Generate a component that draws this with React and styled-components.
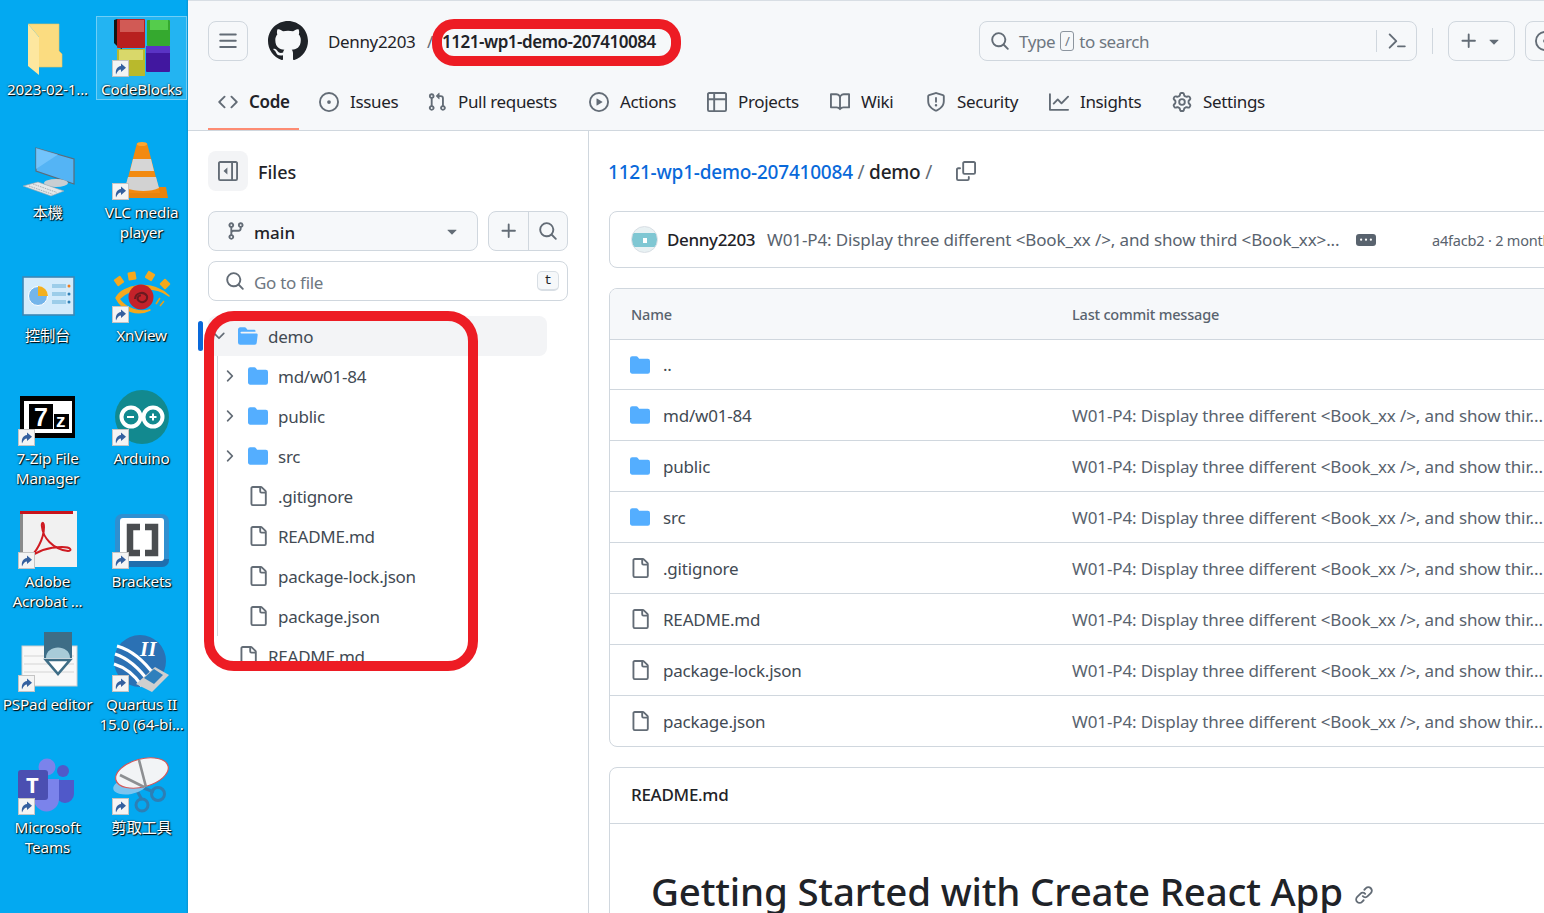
import React from "react";
import styled, { createGlobalStyle } from "styled-components";

const UI = `"Noto Sans", "Open Sans", "Liberation Sans", sans-serif`;

const Global = createGlobalStyle`
  html, body { margin: 0; padding: 0; height: 913px; overflow: hidden; background: #fff; }
  body { font-family: ${UI}; color: #1f2328; }
  * { box-sizing: border-box; }
`;

const Page = styled.div`
  display: flex;
  width: 1544px;
  height: 913px;
  overflow: hidden;
  position: relative;
`;

/* ---------- octicons ---------- */
const OCT = {
  bars: "M1 2.75A.75.75 0 0 1 1.75 2h12.5a.75.75 0 0 1 0 1.5H1.75A.75.75 0 0 1 1 2.75Zm0 5A.75.75 0 0 1 1.75 7h12.5a.75.75 0 0 1 0 1.5H1.75A.75.75 0 0 1 1 7.75ZM1.75 12h12.5a.75.75 0 0 1 0 1.5H1.75a.75.75 0 0 1 0-1.5Z",
  github: "M8 0c4.42 0 8 3.58 8 8a8.013 8.013 0 0 1-5.45 7.59c-.4.08-.55-.17-.55-.38 0-.27.01-1.13.01-2.2 0-.75-.25-1.23-.54-1.48 1.78-.2 3.65-.88 3.65-3.95 0-.88-.31-1.59-.82-2.15.08-.2.36-1.02-.08-2.12 0 0-.67-.22-2.2.82-.64-.18-1.32-.27-2-.27-.68 0-1.36.09-2 .27-1.53-1.03-2.2-.82-2.2-.82-.44 1.1-.16 1.92-.08 2.12-.51.56-.82 1.28-.82 2.15 0 3.06 1.86 3.75 3.64 3.95-.23.2-.44.55-.51 1.07-.46.21-1.61.55-2.33-.66-.15-.24-.6-.83-1.23-.82-.67.01-.27.38.01.53.34.19.73.9.82 1.13.16.45.68 1.31 2.69.94 0 .67.01 1.3.01 1.49 0 .21-.15.45-.55.38A7.995 7.995 0 0 1 0 8c0-4.42 3.58-8 8-8Z",
  code: "m11.28 3.22 4.25 4.25a.75.75 0 0 1 0 1.06l-4.25 4.25a.749.749 0 0 1-1.275-.326.749.749 0 0 1 .215-.734L13.94 8l-3.72-3.72a.749.749 0 0 1 .326-1.275.749.749 0 0 1 .734.215Zm-6.56 0a.751.751 0 0 1 1.042.018.751.751 0 0 1 .018 1.042L2.06 8l3.72 3.72a.749.749 0 0 1-.326 1.275.749.749 0 0 1-.734-.215L.47 8.53a.75.75 0 0 1 0-1.06Z",
  issue: "M8 9.5a1.5 1.5 0 1 0 0-3 1.5 1.5 0 0 0 0 3ZM8 0a8 8 0 1 1 0 16A8 8 0 0 1 8 0ZM1.5 8a6.5 6.5 0 1 0 13 0 6.5 6.5 0 0 0-13 0Z",
  pull: "M1.5 3.25a2.25 2.25 0 1 1 3 2.122v5.256a2.251 2.251 0 1 1-1.5 0V5.372A2.25 2.25 0 0 1 1.5 3.25Zm5.677-.177L9.573.677A.25.25 0 0 1 10 .854V2.5h1A2.5 2.5 0 0 1 13.5 5v5.628a2.251 2.251 0 1 1-1.5 0V5a1 1 0 0 0-1-1h-1v1.646a.25.25 0 0 1-.427.177L7.177 3.427a.25.25 0 0 1 0-.354ZM3.75 2.5a.75.75 0 1 0 0 1.5.75.75 0 0 0 0-1.5Zm0 9.5a.75.75 0 1 0 0 1.5.75.75 0 0 0 0-1.5Zm8.25.75a.75.75 0 1 0 1.5 0 .75.75 0 0 0-1.5 0Z",
  play: "M8 0a8 8 0 1 1 0 16A8 8 0 0 1 8 0ZM1.5 8a6.5 6.5 0 1 0 13 0 6.5 6.5 0 0 0-13 0Zm4.879-2.773 4.264 2.559a.25.25 0 0 1 0 .428l-4.264 2.559A.25.25 0 0 1 6 10.559V5.442a.25.25 0 0 1 .379-.215Z",
  table: "M0 1.75C0 .784.784 0 1.75 0h12.5C15.216 0 16 .784 16 1.75v12.5A1.75 1.75 0 0 1 14.25 16H1.75A1.75 1.75 0 0 1 0 14.25ZM6.5 6.5v8h7.75a.25.25 0 0 0 .25-.25V6.5Zm8-1.5V1.75a.25.25 0 0 0-.25-.25H6.5V5Zm-13 1.5v7.75c0 .138.112.25.25.25H5v-8ZM5 5V1.5H1.75a.25.25 0 0 0-.25.25V5Z",
  book: "M0 1.75A.75.75 0 0 1 .75 1h4.253c1.227 0 2.317.59 3 1.501A3.743 3.743 0 0 1 11.006 1h4.245a.75.75 0 0 1 .75.75v10.5a.75.75 0 0 1-.75.75h-4.507a2.25 2.25 0 0 0-1.591.659l-.622.621a.75.75 0 0 1-1.06 0l-.622-.621A2.25 2.25 0 0 0 5.258 13H.75a.75.75 0 0 1-.75-.75Zm7.251 10.324.004-5.073-.002-2.253A2.25 2.25 0 0 0 5.003 2.5H1.5v9h3.757a3.75 3.75 0 0 1 1.994.574ZM8.755 4.75l-.004 7.322a3.752 3.752 0 0 1 1.992-.572H14.5v-9h-3.495a2.25 2.25 0 0 0-2.25 2.25Z",
  shield: "M7.467.133a1.748 1.748 0 0 1 1.066 0l5.25 1.68A1.75 1.75 0 0 1 15 3.48V7c0 1.566-.32 3.182-1.303 4.682-.983 1.498-2.585 2.813-5.032 3.855a1.697 1.697 0 0 1-1.33 0c-2.447-1.042-4.049-2.357-5.032-3.855C1.32 10.182 1 8.566 1 7V3.48a1.75 1.75 0 0 1 1.217-1.667Zm.61 1.429a.25.25 0 0 0-.153 0l-5.25 1.68a.25.25 0 0 0-.174.238V7c0 1.358.275 2.666 1.057 3.86.784 1.194 2.121 2.34 4.366 3.297a.196.196 0 0 0 .154 0c2.245-.956 3.582-2.104 4.366-3.298C13.225 9.666 13.5 8.36 13.5 7V3.48a.251.251 0 0 0-.174-.237l-5.25-1.68ZM8.75 4.75v3a.75.75 0 0 1-1.5 0v-3a.75.75 0 0 1 1.5 0ZM9 10.5a1 1 0 1 1-2 0 1 1 0 0 1 2 0Z",
  graph: "M1.5 1.75V13.5h13.75a.75.75 0 0 1 0 1.5H.75a.75.75 0 0 1-.75-.75V1.75a.75.75 0 0 1 1.5 0Zm14.28 2.53-5.25 5.25a.75.75 0 0 1-1.06 0L7 7.06 4.28 9.78a.751.751 0 0 1-1.042-.018.751.751 0 0 1-.018-1.042l3.25-3.25a.75.75 0 0 1 1.06 0L10 7.94l4.72-4.72a.751.751 0 0 1 1.042.018.751.751 0 0 1 .018 1.042Z",
  gear: "M8 0a8.2 8.2 0 0 1 .701.031C9.444.095 9.99.645 10.16 1.29l.288 1.107c.018.066.079.158.212.224.231.114.454.243.668.386.123.082.233.09.299.071l1.103-.303c.644-.176 1.392.021 1.82.63.27.385.506.792.704 1.218.315.675.111 1.422-.364 1.891l-.814.806c-.049.048-.098.147-.088.294.016.257.016.515 0 .772-.01.147.038.246.088.294l.814.806c.475.469.679 1.216.364 1.891a7.977 7.977 0 0 1-.704 1.217c-.428.61-1.176.807-1.82.63l-1.102-.302c-.067-.019-.177-.011-.3.071a5.909 5.909 0 0 1-.668.386c-.133.066-.194.158-.211.224l-.29 1.106c-.168.646-.715 1.196-1.458 1.26a8.006 8.006 0 0 1-1.402 0c-.743-.064-1.289-.614-1.458-1.26l-.289-1.106c-.018-.066-.079-.158-.212-.224a5.738 5.738 0 0 1-.668-.386c-.123-.082-.233-.09-.299-.071l-1.103.303c-.644.176-1.392-.021-1.82-.63a8.12 8.12 0 0 1-.704-1.218c-.315-.675-.111-1.422.363-1.891l.815-.806c.05-.048.098-.147.088-.294a6.214 6.214 0 0 1 0-.772c.01-.147-.038-.246-.088-.294l-.815-.806C.635 6.045.431 5.298.746 4.623a7.92 7.92 0 0 1 .704-1.217c.428-.61 1.176-.807 1.82-.63l1.102.302c.067.019.177.011.3-.071.214-.143.437-.272.668-.386.133-.066.194-.158.211-.224l.29-1.106C6.009.645 6.556.095 7.299.03 7.53.01 7.764 0 8 0Zm-.571 1.525c-.036.003-.108.036-.137.146l-.289 1.105c-.147.561-.549.967-.998 1.189-.173.086-.34.183-.5.29-.417.278-.97.423-1.529.27l-1.103-.303c-.109-.03-.175.016-.195.045-.22.312-.412.644-.573.99-.014.031-.021.11.059.19l.815.806c.411.406.562.957.53 1.456a4.709 4.709 0 0 0 0 .582c.032.499-.119 1.05-.53 1.456l-.815.806c-.081.08-.073.159-.059.19.162.346.353.677.573.989.02.03.085.076.195.046l1.102-.303c.56-.153 1.113-.008 1.53.27.161.107.328.204.501.29.447.222.85.629.997 1.189l.289 1.105c.029.109.101.143.137.146a6.6 6.6 0 0 0 1.142 0c.036-.003.108-.036.137-.146l.289-1.105c.147-.561.549-.967.998-1.189.173-.086.34-.183.5-.29.417-.278.97-.423 1.529-.27l1.103.303c.109.029.175-.016.195-.045.22-.313.411-.644.573-.99.014-.031.021-.11-.059-.19l-.815-.806c-.411-.406-.562-.957-.53-1.456a4.709 4.709 0 0 0 0-.582c-.032-.499.119-1.05.53-1.456l.815-.806c.081-.08.073-.159.059-.19a6.464 6.464 0 0 0-.573-.989c-.02-.03-.085-.076-.195-.046l-1.102.303c-.56.153-1.113.008-1.53-.27a4.44 4.44 0 0 0-.501-.29c-.447-.222-.85-.629-.997-1.189l-.289-1.105c-.029-.11-.101-.143-.137-.146a6.6 6.6 0 0 0-1.142 0ZM11 8a3 3 0 1 1-6 0 3 3 0 0 1 6 0ZM9.5 8a1.5 1.5 0 1 0-3.001.001A1.5 1.5 0 0 0 9.5 8Z",
  search: "M10.68 11.74a6 6 0 0 1-7.922-8.982 6 6 0 0 1 8.982 7.922l3.04 3.04a.749.749 0 0 1-.326 1.275.749.749 0 0 1-.734-.215ZM11.5 7a4.499 4.499 0 1 0-8.997 0A4.499 4.499 0 0 0 11.5 7Z",
  plus: "M7.75 2a.75.75 0 0 1 .75.75V7h4.25a.75.75 0 0 1 0 1.5H8.5v4.25a.75.75 0 0 1-1.5 0V8.5H2.75a.75.75 0 0 1 0-1.5H7V2.75A.75.75 0 0 1 7.75 2Z",
  tri: "m4.427 7.427 3.396 3.396a.25.25 0 0 0 .354 0l3.396-3.396A.25.25 0 0 0 11.396 7H4.604a.25.25 0 0 0-.177.427Z",
  branch: "M9.5 3.25a2.25 2.25 0 1 1 3 2.122V6A2.5 2.5 0 0 1 10 8.5H6a1 1 0 0 0-1 1v1.128a2.251 2.251 0 1 1-1.5 0V5.372a2.25 2.25 0 1 1 1.5 0v1.836A2.493 2.493 0 0 1 6 7h4a1 1 0 0 0 1-1v-.628A2.25 2.25 0 0 1 9.5 3.25Zm-6 0a.75.75 0 1 0 1.5 0 .75.75 0 0 0-1.5 0Zm8.25-.75a.75.75 0 1 0 0 1.5.75.75 0 0 0 0-1.5ZM4.25 12a.75.75 0 1 0 0 1.5.75.75 0 0 0 0-1.5Z",
  file: "M2 1.75C2 .784 2.784 0 3.75 0h6.586c.464 0 .909.184 1.237.513l2.914 2.914c.329.328.513.773.513 1.237v9.586A1.75 1.75 0 0 1 13.25 16h-9.5A1.75 1.75 0 0 1 2 14.25Zm1.75-.25a.25.25 0 0 0-.25.25v12.5c0 .138.112.25.25.25h9.5a.25.25 0 0 0 .25-.25V6h-2.75A1.75 1.75 0 0 1 9 4.25V1.5Zm6.75.062V4.25c0 .138.112.25.25.25h2.688l-.011-.013-2.914-2.914-.013-.011Z",
  folder: "M1.75 1A1.75 1.75 0 0 0 0 2.75v10.5C0 14.216.784 15 1.75 15h12.5A1.75 1.75 0 0 0 16 13.25v-8.5A1.75 1.75 0 0 0 14.25 3H7.5a.25.25 0 0 1-.2-.1l-.9-1.2C6.07 1.26 5.55 1 5 1H1.75Z",
  folderOpen: "M.513 1.513A1.75 1.75 0 0 1 1.75 1h3.5c.55 0 1.07.26 1.4.7l.9 1.2a.25.25 0 0 0 .2.1H13a1 1 0 0 1 1 1v.5H2.75a.75.75 0 0 0 0 1.5h11.978a1 1 0 0 1 .994 1.117L15 13.25A1.75 1.75 0 0 1 13.25 15H1.75A1.75 1.75 0 0 1 0 13.25V2.75c0-.464.184-.91.513-1.237Z",
  right: "M6.22 3.22a.75.75 0 0 1 1.06 0l4.25 4.25a.75.75 0 0 1 0 1.06l-4.25 4.25a.751.751 0 0 1-1.042-.018.751.751 0 0 1-.018-1.042L9.94 8 6.22 4.28a.75.75 0 0 1 0-1.06Z",
  down: "M12.78 5.22a.749.749 0 0 1 0 1.06l-4.25 4.25a.749.749 0 0 1-1.06 0L3.22 6.28a.749.749 0 1 1 1.06-1.06L8 8.939l3.72-3.719a.749.749 0 0 1 1.06 0Z",
  copy: "M0 6.75C0 5.784.784 5 1.75 5h1.5a.75.75 0 0 1 0 1.5h-1.5a.25.25 0 0 0-.25.25v7.5c0 .138.112.25.25.25h7.5a.25.25 0 0 0 .25-.25v-1.5a.75.75 0 0 1 1.5 0v1.5A1.75 1.75 0 0 1 9.25 16h-7.5A1.75 1.75 0 0 1 0 14.25ZM5 1.75C5 .784 5.784 0 6.75 0h7.5C15.216 0 16 .784 16 1.75v7.5A1.75 1.75 0 0 1 14.25 11h-7.5A1.75 1.75 0 0 1 5 9.25Zm1.75-.25a.25.25 0 0 0-.25.25v7.5c0 .138.112.25.25.25h7.5a.25.25 0 0 0 .25-.25v-7.5a.25.25 0 0 0-.25-.25Z",
  kebab: "M8 9a1.5 1.5 0 1 0 0-3 1.5 1.5 0 0 0 0 3ZM1.5 9a1.5 1.5 0 1 0 0-3 1.5 1.5 0 0 0 0 3Zm13 0a1.5 1.5 0 1 0 0-3 1.5 1.5 0 0 0 0 3Z",
  link: "m7.775 3.275 1.25-1.25a3.5 3.5 0 1 1 4.95 4.95l-2.5 2.5a3.5 3.5 0 0 1-4.95 0 .751.751 0 0 1 .018-1.042.751.751 0 0 1 1.042-.018 1.998 1.998 0 0 0 2.83 0l2.5-2.5a2.002 2.002 0 0 0-2.83-2.83l-1.25 1.25a.751.751 0 0 1-1.042-.018.751.751 0 0 1-.018-1.042Zm-4.69 9.64a1.998 1.998 0 0 0 2.83 0l1.25-1.25a.751.751 0 0 1 1.042.018.751.751 0 0 1 .018 1.042l-1.25 1.25a3.5 3.5 0 1 1-4.95-4.95l2.5-2.5a3.5 3.5 0 0 1 4.95 0 .751.751 0 0 1-.018 1.042.751.751 0 0 1-1.042.018 1.998 1.998 0 0 0-2.83 0l-2.5 2.5a1.998 1.998 0 0 0 0 2.83Z",
  palette: "m6.354 8.04-4.773 4.773a.75.75 0 1 0 1.061 1.06L7.945 8.57a.75.75 0 0 0 0-1.06L2.642 2.206a.75.75 0 0 0-1.06 1.061L6.353 8.04ZM8.75 11.5a.75.75 0 0 0 0 1.5h5.5a.75.75 0 0 0 0-1.5h-5.5Z",
  sidebar: "M1.75 0h12.5C15.216 0 16 .784 16 1.75v12.5A1.75 1.75 0 0 1 14.25 16H1.75A1.75 1.75 0 0 1 0 14.25V1.75C0 .784.784 0 1.75 0ZM1.5 1.75v12.5c0 .138.112.25.25.25H10.5v-13H1.75a.25.25 0 0 0-.25.25ZM12 14.5h2.25a.25.25 0 0 0 .25-.25V1.75a.25.25 0 0 0-.25-.25H12ZM7.5 5.2v5.6L4.4 8z",
};
const Oct = ({ n, size = 20 }) => (
  <svg width={size} height={size} viewBox="0 0 16 16" fill="currentColor"><path d={OCT[n]} /></svg>
);

/* ---------- desktop ---------- */
const Desktop = styled.div`
  width: 188px;
  flex: none;
  height: 913px;
  background: linear-gradient(90deg, #03a9f1 0, #03a9f1 186px, #0a93cf 188px);
  display: grid;
  grid-template-columns: 95px 91px;
  grid-auto-rows: 123px;
  padding-top: 16px;
  column-gap: 1px;
`;
const DeskItem = styled.div`
  height: 84px;
  display: flex;
  flex-direction: column;
  align-items: center;
  border: 1px solid ${p => (p.$active ? "rgba(255,255,255,.35)" : "transparent")};
  background: ${p => (p.$active ? "rgba(255,255,255,.13)" : "transparent")};
`;
const IconBox = styled.div`
  width: 64px;
  height: 63px;
  flex: none;
  position: relative;
  svg { display: block; overflow: visible; }
`;
const ShortcutBadge = styled.svg`
  position: absolute;
  left: 2px;
  top: 43px;
`;
const DeskLabel = styled.div`
  width: calc(100% + 6px);
  flex: none;
  font: 15.3px/19.5px ${UI}, "Noto Sans CJK TC", sans-serif;
  color: #fff;
  text-align: center;
  white-space: pre-line;
  text-shadow: 1px 1px 1px #000, 0 0 2px rgba(0,0,0,.85);
  letter-spacing: -0.2px;
`;

const Shortcut = () => (
  <ShortcutBadge width="17" height="17" viewBox="0 0 17 17">
    <rect x=".5" y=".5" width="16" height="16" fill="#f4f4f4" stroke="#c4c4c4" />
    <path d="M4 14.500c-.8-4.500 1-8 5-8.500V3.500l5 4.300-5 4.300V9.500c-2.200 0-3.500 1.500-5 5z" fill="#34609f" />
  </ShortcutBadge>
);

const S = ({ children }) => <svg width="64" height="64" viewBox="0 0 64 64">{children}</svg>;

const FolderIco = () => (
  <S>
    <path d="M12 7h31v27l3 3v13H23V20z" fill="#fbdc80" />
    <path d="M12 7l11 13v38l-11-9z" fill="#fde79f" />
    <path d="M12 7h31v27l3 3v13H23" fill="none" stroke="#ecc65f" strokeWidth=".6" />
  </S>
);
const CodeBlocksIco = () => (
  <S>
    <path d="M4 3l3-1h5v30l-4-2-4-4z" fill="#151515" />
    <rect x="7" y="2" width="28" height="29" rx="1" fill="#b8201f" />
    <rect x="10" y="3" width="24" height="12" fill="#d15a55" />
    <rect x="37" y="3" width="23" height="26" rx="1" fill="#35a92f" />
    <rect x="40" y="3" width="18" height="10" fill="#55cc4c" />
    <rect x="7" y="32" width="28" height="27" fill="#b9b92c" />
    <rect x="9" y="33" width="24" height="10" fill="#d9d86a" />
    <rect x="36" y="29" width="24" height="26" rx="1" fill="#41179f" />
    <rect x="36" y="29" width="24" height="7" fill="#5a33c4" />
  </S>
);
const MonitorIco = () => (
  <S>
    <path d="M20 8l38 11v25L20 31z" fill="#54b4f5" stroke="#5d6b78" strokeWidth="1.2" />
    <path d="M20 8l22 6.5L20 29z" fill="#7fcbff" opacity=".7" />
    <ellipse cx="40" cy="43" rx="12" ry="4" fill="#c9ced2" />
    <path d="M22 42l26 9-13 5-28-10z" fill="#e4e7e9" stroke="#9aa3aa" strokeWidth=".6" />
    <path d="M17 44l24 8.5M13 46l24 8.500" stroke="#a5adb3" strokeWidth="1" strokeDasharray="1.5 1" />
  </S>
);
const VlcIco = () => (
  <S>
    <path d="M12 47h44l2 11H10z" fill="#e8830c" />
    <path d="M27 3h10l13 50H14z" fill="#f28a10" />
    <path d="M23 19h18l3 12H20z" fill="#d6d6d6" />
    <path d="M18 37h28l3 11c-8 4-22 4-34 0z" fill="#d2d2d2" />
    <ellipse cx="32" cy="4" rx="5" ry="2" fill="#ffa62e" />
  </S>
);
const ControlIco = () => (
  <S>
    <rect x="7" y="14" width="51" height="38" fill="#d3ebfb" stroke="#3e87b5" strokeWidth="1.6" />
    <circle cx="22" cy="33" r="9.5" fill="#74b5ea" stroke="#fff" strokeWidth="1" />
    <path d="M22 33v-10a10 10 0 0 1 10 10z" fill="#f2b01f" />
    <rect x="36" y="21" width="14" height="4" fill="#9ccde9" />
    <rect x="36" y="29" width="14" height="4" fill="#9ccde9" />
    <rect x="36" y="37" width="14" height="4" fill="#9ccde9" />
    <circle cx="53" cy="23" r="1.5" fill="#ef7d1d" />
    <circle cx="53" cy="31" r="1.5" fill="#2f7fb5" />
    <circle cx="53" cy="39" r="1.5" fill="#2f7fb5" />
  </S>
);
const XnViewIco = () => (
  <S>
    <g fill="#f5a81c">
      <rect x="5" y="14" width="8" height="8" rx="1" transform="rotate(-35 9 18)" />
      <rect x="18" y="9" width="8" height="8" rx="1" transform="rotate(-10 22 13)" />
      <rect x="36" y="9" width="8" height="8" rx="1" transform="rotate(30 40 13)" />
      <rect x="51" y="17" width="8" height="8" rx="1" transform="rotate(45 55 21)" />
    </g>
    <path d="M6 35C12 22 42 16 59 33C46 23 22 23 9 36C16 46 30 50 40 47C28 53 13 49 6 35Z" fill="#f5a81c" stroke="#f5a81c" strokeWidth="1.5" strokeLinejoin="round" />
    <circle cx="31" cy="34" r="12.500" fill="#c4222a" />
    <path d="M25 36a6.500 6.500 0 0 1 12-3 5 5 0 0 1-8 5 3 3 0 0 1 2-5.500" fill="none" stroke="#6b1a20" strokeWidth="2" />
    <path d="M46 41l4-6M50 43l4-5" stroke="#e0a01e" strokeWidth="1.6" />
  </S>
);
const ZipText = styled.text`
  font: 700 ${p => p.$s}px "Liberation Sans", sans-serif;
  fill: #fff;
`;
const ZipIco = () => (
  <S>
    <rect x="4" y="10" width="55" height="42" fill="#000" />
    <rect x="8" y="15" width="48" height="32" fill="#fff" />
    <rect x="13" y="18" width="24" height="25" fill="#000" />
    <rect x="38" y="28" width="15" height="15" fill="#000" />
    <ZipText x="18" y="40" $s={25}>7</ZipText>
    <ZipText x="40" y="41" $s={19}>z</ZipText>
  </S>
);
const ArduinoIco = () => (
  <S>
    <circle cx="32" cy="31" r="27" fill="#12898f" />
    <circle cx="21" cy="31" r="9.500" fill="none" stroke="#fff" strokeWidth="4" />
    <circle cx="43" cy="31" r="9.500" fill="none" stroke="#fff" strokeWidth="4" />
    <path d="M17 31h7M39.500 31h7M43 27.500v7" stroke="#fff" strokeWidth="2" />
  </S>
);
const AcrobatIco = () => (
  <S>
    <rect x="4" y="2" width="57" height="56" fill="#f1f1f1" />
    <rect x="4" y="2" width="3" height="56" fill="#8a8a8a" />
    <rect x="4" y="2" width="53" height="3" fill="#c8141c" />
    <path d="M12 50c8-6 16-20 16-32 0-6-3-5-2 0 1 10 10 22 26 24 4 0 4-4-6-4-10 0-24 3-34 12z" fill="none" stroke="#cf1b22" strokeWidth="2" />
  </S>
);
const BracketsIco = () => (
  <S>
    <rect x="5" y="5" width="54" height="53" rx="7" fill="#2f8fd0" />
    <path d="M5 50h54v1a7 7 0 0 1-7 7H12a7 7 0 0 1-7-7z" fill="#1f6fae" />
    <rect x="10" y="9" width="44" height="43" rx="3" fill="#fff" />
    <path d="M30 18H20v26h10M35 18h10v26H35" fill="none" stroke="#4a4d50" strokeWidth="6.500" />
  </S>
);
const PspadIco = () => (
  <S>
    <rect x="6" y="14" width="55" height="40" fill="#f8f8f8" stroke="#cfcfcf" />
    <path d="M8 24h50M8 32h50M8 40h50" stroke="#d4d4d4" />
    <rect x="28" y="0" width="28" height="26" fill="#3e6d86" />
    <path d="M30 26c0-14 24-14 24 0z" fill="#a8cbd8" />
    <path d="M30 28h24L42 42z" fill="#fff" stroke="#3e6d86" strokeWidth="2.600" />
    <path d="M36 30h12l-6 7z" fill="#fff" />
  </S>
);
const QuartusNum = styled.text`
  font: italic 700 21px "Liberation Serif", serif;
  fill: #fff;
`;
const QuartusIco = () => (
  <S>
    <circle cx="30" cy="29" r="26" fill="#2b71b4" />
    <path d="M5 22c12 4 24 14 34 28M7 14c14 4 28 16 38 30M4 32c10 3 20 10 28 22" fill="none" stroke="#fff" strokeWidth="3.200" />
    <path d="M26 52l19-17 14 8-17 17z" fill="#cfcfcf" />
    <path d="M34 46l10-9 9 6-9 9z" fill="#2f80bd" />
    <QuartusNum x="30" y="24">II</QuartusNum>
  </S>
);
const TeamsT = styled.text`
  font: 700 22px ${UI}, sans-serif;
  fill: #fff;
`;
const TeamsIco = () => (
  <S>
    <circle cx="47" cy="16" r="6" fill="#5059c9" />
    <path d="M38 25h20v14a9 9 0 0 1-18 0z" fill="#5059c9" />
    <circle cx="31" cy="12" r="8.500" fill="#7b83eb" />
    <path d="M18 24h25v20a12.500 12.500 0 0 1-25 0z" fill="#7b83eb" />
    <rect x="2" y="15" width="30" height="30" rx="3" fill="#4b4fb1" />
    <TeamsT x="10" y="38">T</TeamsT>
  </S>
);
const SnipIco = () => (
  <S>
    <circle cx="32" cy="50" r="6" fill="none" stroke="#2d7fb5" strokeWidth="3" />
    <circle cx="48" cy="39" r="6.500" fill="none" stroke="#2d7fb5" strokeWidth="3" />
    <path d="M24 30l8 15M26 30l18 7" stroke="#2d7fb5" strokeWidth="3" />
    <ellipse cx="20" cy="31" rx="17" ry="8" fill="#7cc4ef" transform="rotate(-10 20 31)" />
    <ellipse cx="32" cy="18" rx="27" ry="14" fill="#f2f4f6" stroke="#d4585a" strokeWidth="1.200" transform="rotate(-15 32 18)" />
    <path d="M29 5l7 27M10 20l24 12" stroke="#8d8f92" strokeWidth="2.600" />
  </S>
);

const deskItems = [
  { label: "2023-02-1...", Icon: FolderIco },
  { label: "CodeBlocks", Icon: CodeBlocksIco, link: true, active: true },
  { label: "本機", Icon: MonitorIco },
  { label: "VLC media\nplayer", Icon: VlcIco, link: true },
  { label: "控制台", Icon: ControlIco },
  { label: "XnView", Icon: XnViewIco, link: true },
  { label: "7-Zip File\nManager", Icon: ZipIco, link: true },
  { label: "Arduino", Icon: ArduinoIco, link: true },
  { label: "Adobe\nAcrobat ...", Icon: AcrobatIco, link: true },
  { label: "Brackets", Icon: BracketsIco, link: true },
  { label: "PSPad editor", Icon: PspadIco, link: true },
  { label: "Quartus II\n15.0 (64-bi...", Icon: QuartusIco, link: true },
  { label: "Microsoft\nTeams", Icon: TeamsIco, link: true },
  { label: "剪取工具", Icon: SnipIco, link: true },
];

/* ---------- github header ---------- */
const Main = styled.div`
  flex: 1;
  min-width: 0;
  overflow: hidden;
  display: flex;
  flex-direction: column;
`;
const Header = styled.header`
  height: 131px;
  flex: none;
  background: #f6f8fa;
  border-top: 1px solid #d8dee4;
  border-bottom: 1px solid #d0d7de;
  padding: 20px 0 0 20px;
  display: flex;
  flex-direction: column;
`;
const TopRow = styled.div`
  display: flex;
  align-items: center;
  height: 40px;
  width: 1400px;
`;
const IconButton = styled.div`
  width: ${p => p.$w || 40}px;
  height: 40px;
  flex: none;
  display: flex;
  align-items: center;
  justify-content: center;
  gap: 5px;
  border: 1px solid #d0d7de;
  border-radius: 8px;
  color: #636c76;
  background: #f6f8fa;
`;
const Logo = styled.div`
  margin: 0 20px;
  display: flex;
  color: #1f2328;
`;
const Owner = styled.span`
  font-size: 17px;
  color: #1f2328;
  width: 99px;
  letter-spacing: -0.35px;
`;
const Slash = styled.span`
  font-size: 17px;
  color: #636c76;
  width: 15px;
`;
const RepoName = styled.span`
  font-size: 17px;
  font-weight: 600;
  color: #1f2328;
  letter-spacing: -0.47px;
  width: 537px;
  white-space: nowrap;
`;
const SearchBar = styled.div`
  width: 438px;
  height: 40px;
  flex: none;
  border: 1px solid #d0d7de;
  border-radius: 8px;
  display: flex;
  align-items: center;
  padding-left: 10px;
  color: #636c76;
  font-size: 17px;
  letter-spacing: -0.4px;
`;
const SearchText = styled.span`
  margin-left: 9px;
  flex: 1;
  display: flex;
  align-items: center;
  gap: 5px;
  color: #6e7781;
`;
const SlashKey = styled.span`
  width: 14px;
  height: 20px;
  border: 1px solid #8c959f;
  border-radius: 3px;
  font-size: 13px;
  line-height: 18px;
  text-align: center;
`;
const PaletteCell = styled.span`
  width: 40px;
  height: 22px;
  border-left: 1px solid #d0d7de;
  display: flex;
  align-items: center;
  justify-content: center;
`;
const VDivider = styled.span`
  width: 1px;
  height: 26px;
  background: #d0d7de;
  margin: 0 15px;
`;
const NextButton = styled.div`
  margin-left: 10px;
`;
const Tabs = styled.nav`
  display: flex;
  gap: 10px;
  margin-top: 8px;
  flex: 1;
`;
const Tab = styled.div`
  width: ${p => p.$w}px;
  flex: none;
  padding: 4px 0 0 10px;
  display: flex;
  align-items: center;
  gap: 11px;
  white-space: nowrap;
  font-size: 17px;
  letter-spacing: -0.35px;
  color: #1f2328;
  font-weight: ${p => (p.$active ? 600 : 400)};
  box-shadow: ${p => (p.$active ? "inset 0 -2px 0 #fd8c73" : "none")};
  svg { color: #636c76; flex: none; }
`;

/* ---------- body ---------- */
const Body = styled.div`
  display: flex;
  flex: 1;
  min-height: 0;
`;
const Tree = styled.aside`
  width: 401px;
  flex: none;
  border-right: 1px solid #d0d7de;
  padding: 20px 20px 0 20px;
  position: relative;
`;
const FilesHead = styled.div`
  display: flex;
  align-items: center;
  gap: 10px;
  font-size: 18px;
  font-weight: 500;
  height: 40px;
  margin-bottom: 20px;
  span { padding-top: 2px; }
`;
const SidebarBtn = styled.div`
  width: 40px;
  height: 40px;
  border-radius: 8px;
  background: #f3f4f6;
  color: #636c76;
  display: flex;
  align-items: center;
  justify-content: center;
`;
const BranchRow = styled.div`
  display: flex;
  gap: 10px;
  margin-bottom: 10px;
`;
const BranchBtn = styled.div`
  width: 270px;
  height: 40px;
  border: 1px solid #d0d7de;
  border-radius: 8px;
  background: #f6f8fa;
  display: flex;
  align-items: center;
  padding: 0 15px 0 17px;
  gap: 8px;
  font-size: 17px;
  font-weight: 500;
  color: #1f2328;
  span { padding-top: 2px; }
  svg { color: #636c76; flex: none; }
  svg:last-child { margin-left: auto; }
`;
const SplitBtn = styled.div`
  width: 80px;
  height: 40px;
  border: 1px solid #d0d7de;
  border-radius: 8px;
  background: #f6f8fa;
  display: grid;
  grid-template-columns: 1fr 1fr;
  color: #636c76;
`;
const SplitCell = styled.span`
  display: flex;
  align-items: center;
  justify-content: center;
  & + & { border-left: 1px solid #d0d7de; }
`;
const GoToFile = styled.div`
  height: 40px;
  border: 1px solid #d0d7de;
  border-radius: 8px;
  display: flex;
  align-items: center;
  padding: 0 8px 0 16px;
  color: #6e7781;
  font-size: 17px;
  letter-spacing: -0.3px;
  gap: 9px;
  svg { color: #636c76; }
  margin-bottom: 15px;
`;
const GoToText = styled.span`
  padding-top: 2px;
`;
const Kbd = styled.span`
  margin-left: auto;
  width: 22px;
  height: 20px;
  background: #f6f8fa;
  border: 1px solid #d8dee4;
  border-bottom-width: 2px;
  border-radius: 5px;
  font: 13px/17px "Liberation Mono", monospace;
  color: #1f2328;
  text-align: center;
`;
const TreeList = styled.div`
  position: relative;
  height: 345px;
  overflow: hidden;
`;
const TreeRow = styled.div`
  height: 40px;
  width: 339px;
  border-radius: 8px;
  display: flex;
  align-items: center;
  padding-left: ${p => p.$pad}px;
  background: ${p => (p.$selected ? "#f3f4f6" : "transparent")};
  font-size: 17px;
  letter-spacing: -0.25px;
  color: #424a53;
  white-space: nowrap;
`;
const Twisty = styled.span`
  width: 20px;
  margin-right: 9px;
  flex: none;
  display: flex;
  justify-content: center;
  color: #636c76;
`;
const TreeIcon = styled.span`
  width: 30px;
  flex: none;
  display: flex;
  color: ${p => (p.$folder ? "#54aeff" : "#636c76")};
`;
const Guide = styled.span`
  position: absolute;
  left: 9px;
  top: 40px;
  height: 280px;
  width: 1px;
  background: #d0d7de;
`;
const ActiveMark = styled.span`
  position: absolute;
  left: 10px;
  top: 190px;
  width: 5px;
  height: 30px;
  border-radius: 3px;
  background: #0969da;
`;

/* ---------- content ---------- */
const Content = styled.section`
  flex: none;
  width: 1100px;
  padding: 20px;
`;
const Crumbs = styled.div`
  height: 40px;
  display: flex;
  align-items: center;
  font-size: 19px;
  letter-spacing: -0.22px;
  margin-bottom: 20px;
  white-space: pre;
  padding-top: 2px;
`;
const CrumbRepo = styled.span`
  color: #0969da;
  font-weight: 500;
  margin-left: -1px;
`;
const CrumbDir = styled.span`
  font-weight: 500;
  color: #1f2328;
`;
const CrumbSep = styled.span`
  color: #636c76;
`;
const CopyIcon = styled.span`
  margin: -2px 0 0 24px;
  display: flex;
  color: #636c76;
`;
const CommitBox = styled.div`
  height: 57px;
  border: 1px solid #d0d7de;
  border-radius: 8px;
  display: flex;
  align-items: center;
  padding-left: 21px;
  margin-bottom: 20px;
  white-space: nowrap;
  font-size: 17px;
`;
const Avatar = styled.span`
  width: 27px;
  height: 27px;
  border-radius: 50%;
  border: 1px solid #d8dee4;
  background: linear-gradient(#e8f1f3 0 22%, #7fc7d3 22% 78%, #e8f1f3 78%);
  position: relative;
  flex: none;
  margin-right: 9px;
  &::after {
    content: "";
    position: absolute;
    left: 11px;
    top: 11px;
    width: 4px;
    height: 5px;
    background: #fff;
  }
`;
const Author = styled.span`
  font-weight: 500;
  width: 100px;
  flex: none;
  letter-spacing: -0.35px;
`;
const CommitMsg = styled.span`
  color: #59636e;
  width: 589px;
  flex: none;
  letter-spacing: -0.12px;
`;
const MoreBtn = styled.span`
  width: 20px;
  height: 12px;
  border-radius: 3px;
  background: #59636e;
  color: #fff;
  display: flex;
  align-items: center;
  justify-content: center;
  flex: none;
`;
const CommitMeta = styled.span`
  margin-left: 56px;
  font-size: 14.5px;
  color: #59636e;
  letter-spacing: -0.2px;
`;
const TableBox = styled.div`
  border: 1px solid #d0d7de;
  border-radius: 8px;
  overflow: hidden;
  margin-bottom: 20px;
`;
const TRow = styled.div`
  display: grid;
  grid-template-columns: 441px 1fr;
  align-items: center;
  height: ${p => p.$h || 51}px;
  padding-left: 21px;
  white-space: nowrap;
  font-size: 17px;
  border-top: 1px solid #d0d7de;
  &:first-child { border-top: 0; }
`;
const THead = styled(TRow)`
  height: 50px;
  background: #f6f8fa;
  font-size: 14.5px;
  font-weight: 500;
  color: #59636e;
  letter-spacing: -0.2px;
`;
const NameCell = styled.span`
  display: flex;
  align-items: center;
  gap: 13px;
  margin-left: -1px;
  color: #424a53;
  letter-spacing: -0.2px;
  svg { color: ${p => (p.$folder ? "#54aeff" : "#636c76")}; flex: none; }
`;
const MsgCell = styled.span`
  color: #59636e;
  letter-spacing: -0.12px;
`;
const ReadmeBox = styled.div`
  border: 1px solid #d0d7de;
  border-radius: 8px 8px 0 0;
  height: 300px;
`;
const ReadmeHead = styled.div`
  height: 56px;
  border-bottom: 1px solid #d0d7de;
  padding: 0 0 2px 21px;
  display: flex;
  align-items: center;
  font-size: 17px;
  font-weight: 500;
  letter-spacing: -0.3px;
`;
const Heading = styled.h1`
  margin: 42px 0 0 41px;
  font-size: 38.5px;
  line-height: 50px;
  font-weight: 500;
  color: #1f2328;
  display: flex;
  align-items: center;
  gap: 11px;
  letter-spacing: -0.2px;
  white-space: nowrap;
  svg { color: #636c76; margin-top: 8px; }
`;

/* ---------- red annotations ---------- */
const Annotation = styled.div`
  position: absolute;
  left: ${p => p.$x}px;
  top: ${p => p.$y}px;
  width: ${p => p.$w}px;
  height: ${p => p.$h}px;
  border: 10px solid #ed1c24;
  border-radius: ${p => p.$r}px;
  pointer-events: none;
`;

const tabs = [
  { t: "Code", i: "code", w: 91, active: true },
  { t: "Issues", i: "issue", w: 98 },
  { t: "Pull requests", i: "pull", w: 152 },
  { t: "Actions", i: "play", w: 108 },
  { t: "Projects", i: "table", w: 113 },
  { t: "Wiki", i: "book", w: 86 },
  { t: "Security", i: "shield", w: 113 },
  { t: "Insights", i: "graph", w: 113 },
  { t: "Settings", i: "gear", w: 110 },
];

const treeRows = [
  { n: "md/w01-84", f: 1 },
  { n: "public", f: 1 },
  { n: "src", f: 1 },
  { n: ".gitignore" },
  { n: "README.md" },
  { n: "package-lock.json" },
  { n: "package.json" },
];

const MSG = "W01-P4: Display three different <Book_xx />, and show thir...";

export default function App() {
  return (
    <Page>
      <Global />
      <Desktop>
        {deskItems.map(({ label, Icon, link, active }) => (
          <DeskItem key={label} $active={active}>
            <IconBox>
              <Icon />
              {link && <Shortcut />}
            </IconBox>
            <DeskLabel>{label}</DeskLabel>
          </DeskItem>
        ))}
      </Desktop>
      <Main>
        <Header>
          <TopRow>
            <IconButton><Oct n="bars" /></IconButton>
            <Logo><Oct n="github" size={40} /></Logo>
            <Owner>Denny2203</Owner>
            <Slash>/</Slash>
            <RepoName>1121-wp1-demo-207410084</RepoName>
            <SearchBar>
              <Oct n="search" />
              <SearchText>Type <SlashKey>/</SlashKey> to search</SearchText>
              <PaletteCell><Oct n="palette" /></PaletteCell>
            </SearchBar>
            <VDivider />
            <IconButton $w={67}><Oct n="plus" /><Oct n="tri" /></IconButton>
            <NextButton><IconButton><Oct n="issue" /></IconButton></NextButton>
          </TopRow>
          <Tabs>
            {tabs.map(({ t, i, w, active }) => (
              <Tab key={t} $w={w} $active={active}><Oct n={i} />{t}</Tab>
            ))}
          </Tabs>
        </Header>
        <Body>
          <Tree>
            <FilesHead><SidebarBtn><Oct n="sidebar" /></SidebarBtn><span>Files</span></FilesHead>
            <BranchRow>
              <BranchBtn><Oct n="branch" /><span>main</span><Oct n="tri" /></BranchBtn>
              <SplitBtn>
                <SplitCell><Oct n="plus" /></SplitCell>
                <SplitCell><Oct n="search" /></SplitCell>
              </SplitBtn>
            </BranchRow>
            <GoToFile><Oct n="search" /><GoToText>Go to file</GoToText><Kbd>t</Kbd></GoToFile>
            <ActiveMark />
            <TreeList>
              <TreeRow $selected $pad={1}>
                <Twisty><Oct n="down" size={18} /></Twisty>
                <TreeIcon $folder><Oct n="folderOpen" /></TreeIcon>
                demo
              </TreeRow>
              <Guide />
              {treeRows.map(({ n, f }) => (
                <TreeRow key={n} $pad={11}>
                  <Twisty>{f ? <Oct n="right" size={18} /> : null}</Twisty>
                  <TreeIcon $folder={f}><Oct n={f ? "folder" : "file"} /></TreeIcon>
                  {n}
                </TreeRow>
              ))}
              <TreeRow $pad={30}>
                <TreeIcon><Oct n="file" /></TreeIcon>
                README.md
              </TreeRow>
            </TreeList>
          </Tree>
          <Content>
            <Crumbs>
              <CrumbRepo>1121-wp1-demo-207410084</CrumbRepo>
              <CrumbSep> / </CrumbSep>
              <CrumbDir>demo</CrumbDir>
              <CrumbSep> /</CrumbSep>
              <CopyIcon><Oct n="copy" /></CopyIcon>
            </Crumbs>
            <CommitBox>
              <Avatar />
              <Author>Denny2203</Author>
              <CommitMsg>W01-P4: Display three different &lt;Book_xx /&gt;, and show third &lt;Book_xx&gt;...</CommitMsg>
              <MoreBtn><Oct n="kebab" size={12} /></MoreBtn>
              <CommitMeta>a4facb2 · 2 months ago</CommitMeta>
            </CommitBox>
            <TableBox>
              <THead><span>Name</span><span>Last commit message</span></THead>
              <TRow $h={50}><NameCell $folder><Oct n="folder" />..</NameCell><span /></TRow>
              {treeRows.map(({ n, f }) => (
                <TRow key={n}>
                  <NameCell $folder={f}><Oct n={f ? "folder" : "file"} />{n}</NameCell>
                  <MsgCell>{MSG}</MsgCell>
                </TRow>
              ))}
            </TableBox>
            <ReadmeBox>
              <ReadmeHead>README.md</ReadmeHead>
              <Heading>Getting Started with Create React App<Oct n="link" /></Heading>
            </ReadmeBox>
          </Content>
        </Body>
      </Main>
      <Annotation $x={432} $y={19} $w={249} $h={47} $r={22} />
      <Annotation $x={204} $y={311} $w={274} $h={360} $r={30} />
    </Page>
  );
}
